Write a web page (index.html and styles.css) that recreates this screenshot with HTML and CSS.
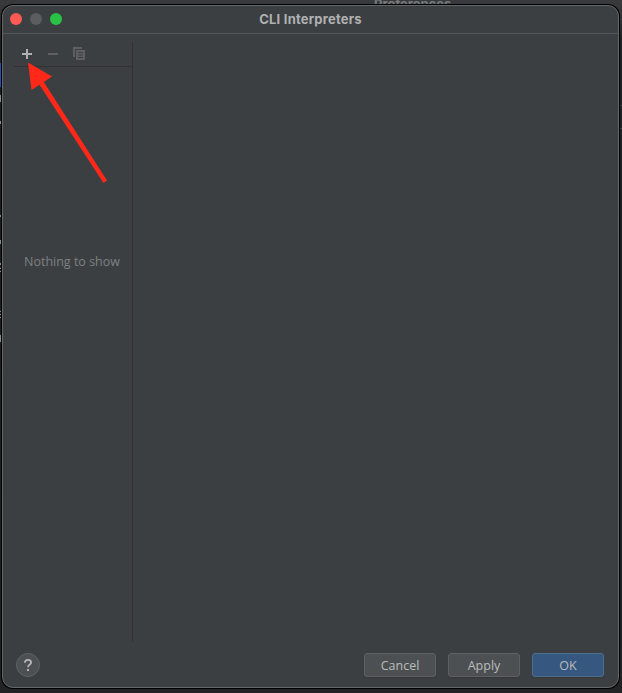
FILE: index.html
```html
<!DOCTYPE html>
<html lang="en">
<head>
<meta charset="utf-8">
<title>CLI Interpreters</title>
<link rel="stylesheet" href="styles.css">
</head>
<body>
<div class="backdrop" aria-hidden="true">
  <div class="backdrop-title">Preferences</div>
  <svg class="backdrop-edge" width="2" height="693">
    <path fill="#2151b5" d="M0 63h1v24H0z"/>
    <path fill="#8b8d8f" d="M0 95h1v7H0zM0 121h1v3H0zM0 215h1v2H0zM0 240h1v4H0zM0 263h1v2H0zM0 268h1v1H0zM0 271h1v1H0zM0 311h1v1H0zM0 314h1v1H0zM0 317h1v1H0zM0 335h1v7H0z"/>
  </svg>
  <svg class="backdrop-edge right" width="2" height="693">
    <path fill="#3c3e40" d="M0 19h2v1H0zM0 105h2v1H0zM0 128h2v1H0z"/>
  </svg>
</div>
<main class="window">
  <header class="titlebar">
    <div class="lights"><i class="close"></i><i class="minimize"></i><i class="maximize"></i></div>
    <h1>CLI Interpreters</h1>
  </header>
  <section class="content">
    <aside class="sidebar">
      <div class="toolbar">
        <svg width="16" height="16"><path fill="#afb1b3" d="M7 3h2v4h4v2H9v4H7V9H3V7h4z"/></svg>
        <svg width="16" height="16"><path fill="#5d5f61" d="M3 7h10v2H3z"/></svg>
        <svg width="16" height="16"><path fill="#5d5f61" d="M2 1h9v2H4v8H2z"/><path fill="#5d5f61" fill-rule="evenodd" d="M5 4h9v10H5zM7 6v1h5V6zM7 8.5v1h5v-1zM7 11v1h5v-1z"/></svg>
      </div>
      <div class="empty"><span>Nothing to show</span></div>
    </aside>
    <div class="details"></div>
  </section>
  <footer class="footer">
    <button class="help" aria-label="Help"><svg width="24" height="24"><path fill="none" stroke="#b4b6b8" stroke-width="1.8" d="M8.9 9.7C8.9 7.8 10.2 6.8 12 6.8S15.1 7.8 15.1 9.4C15.1 11.5 12 11.6 12 14.3"/><path fill="#b4b6b8" d="M11 16h2v2h-2z"/></svg></button>
    <div class="actions">
      <button class="btn">Cancel</button>
      <button class="btn">Apply</button>
      <button class="btn primary">OK</button>
    </div>
  </footer>
</main>
<svg class="arrow" width="622" height="200" aria-hidden="true"><path fill="#ff2819" d="M28 62.5 52 76.5 43.8 82 107 180.5 103.5 183 39.5 84.8 31.5 90z"/></svg>
</body>
</html>
```
FILE: styles.css
```css
* {
  box-sizing: border-box;
}

body {
  margin: 0;
  width: 622px;
  height: 693px;
  padding: 5px 3px 5px 2px;
  position: relative;
  overflow: hidden;
  background: #222325;
  font-family: "Open Sans", "Noto Sans", sans-serif;
}

.backdrop {
  position: absolute;
  inset: 0;
  background: linear-gradient(#37393b 0 5px, #202224 40px, #1d1f21 200px, #222325 680px);
}

/* The lower part of this title lies behind the dialog. */
.backdrop-title {
  position: absolute;
  left: 374px;
  top: -3px;
  color: #77797b;
  font: bold 13px/15px Inter, sans-serif;
}

.backdrop-edge {
  position: absolute;
  left: 0;
  top: 0;
}

.backdrop-edge.right {
  left: auto;
  right: 0;
}

.window {
  position: relative;
  width: 617px;
  height: 683px;
  display: flex;
  flex-direction: column;
  border: 1px solid #656869;
  border-radius: 11px;
  background: #3c3f41;
  box-shadow: 0 0 0 1px #000;
}

.titlebar {
  height: 28px;
  flex: none;
  position: relative;
  border-bottom: 1px solid #535657;
}

.lights {
  position: absolute;
  left: 7px;
  top: 7px;
  display: flex;
  gap: 8px;
}

.lights i {
  width: 12px;
  height: 12px;
  border-radius: 50%;
}

.close { background: #ff5b54; }
.minimize { background: #5b5d5f; }
.maximize { background: #2ac147; }

h1 {
  margin: 0;
  text-align: center;
  color: #afb1b2;
  font: bold 13px/26px Inter, sans-serif;
  letter-spacing: 0.22px;
}

.content {
  flex: none;
  height: 600px;
  margin-top: 8px;
  padding-left: 11px;
  display: flex;
}

.sidebar {
  width: 119px;
  display: flex;
  flex-direction: column;
  border-right: 1px solid #323232;
}

.toolbar {
  height: 25px;
  flex: none;
  display: flex;
  gap: 10px;
  padding: 4px 0 0 5px;
  border-bottom: 1px solid #323232;
}

.toolbar svg {
  display: block;
}

.empty {
  padding: 185px 0 0 10px;
  color: #7e8081;
  font-size: 12.5px;
  line-height: 20px;
  white-space: nowrap;
}

.details {
  flex: 1;
}

.footer {
  display: flex;
  justify-content: space-between;
  padding: 11px 14px 0 13px;
}

.help {
  width: 24px;
  height: 24px;
  padding: 0;
  border: 1px solid #616466;
  border-radius: 50%;
  background: #4c5052;
}

.help svg {
  display: block;
  margin: -1px;
}

.actions {
  display: flex;
  gap: 12px;
}

.btn {
  width: 72px;
  height: 24px;
  padding: 1px 0 0;
  border: 1px solid #5e6162;
  border-radius: 3px;
  background: #4c5052;
  box-shadow: 0 1px 1px #36383a;
  color: #bbb;
  font: 500 12.5px/21px "Open Sans", "Noto Sans", sans-serif;
}

.primary {
  border-color: #4c708c;
  background: #365880;
}

.arrow {
  position: absolute;
  left: 0;
  top: 0;
}
```
